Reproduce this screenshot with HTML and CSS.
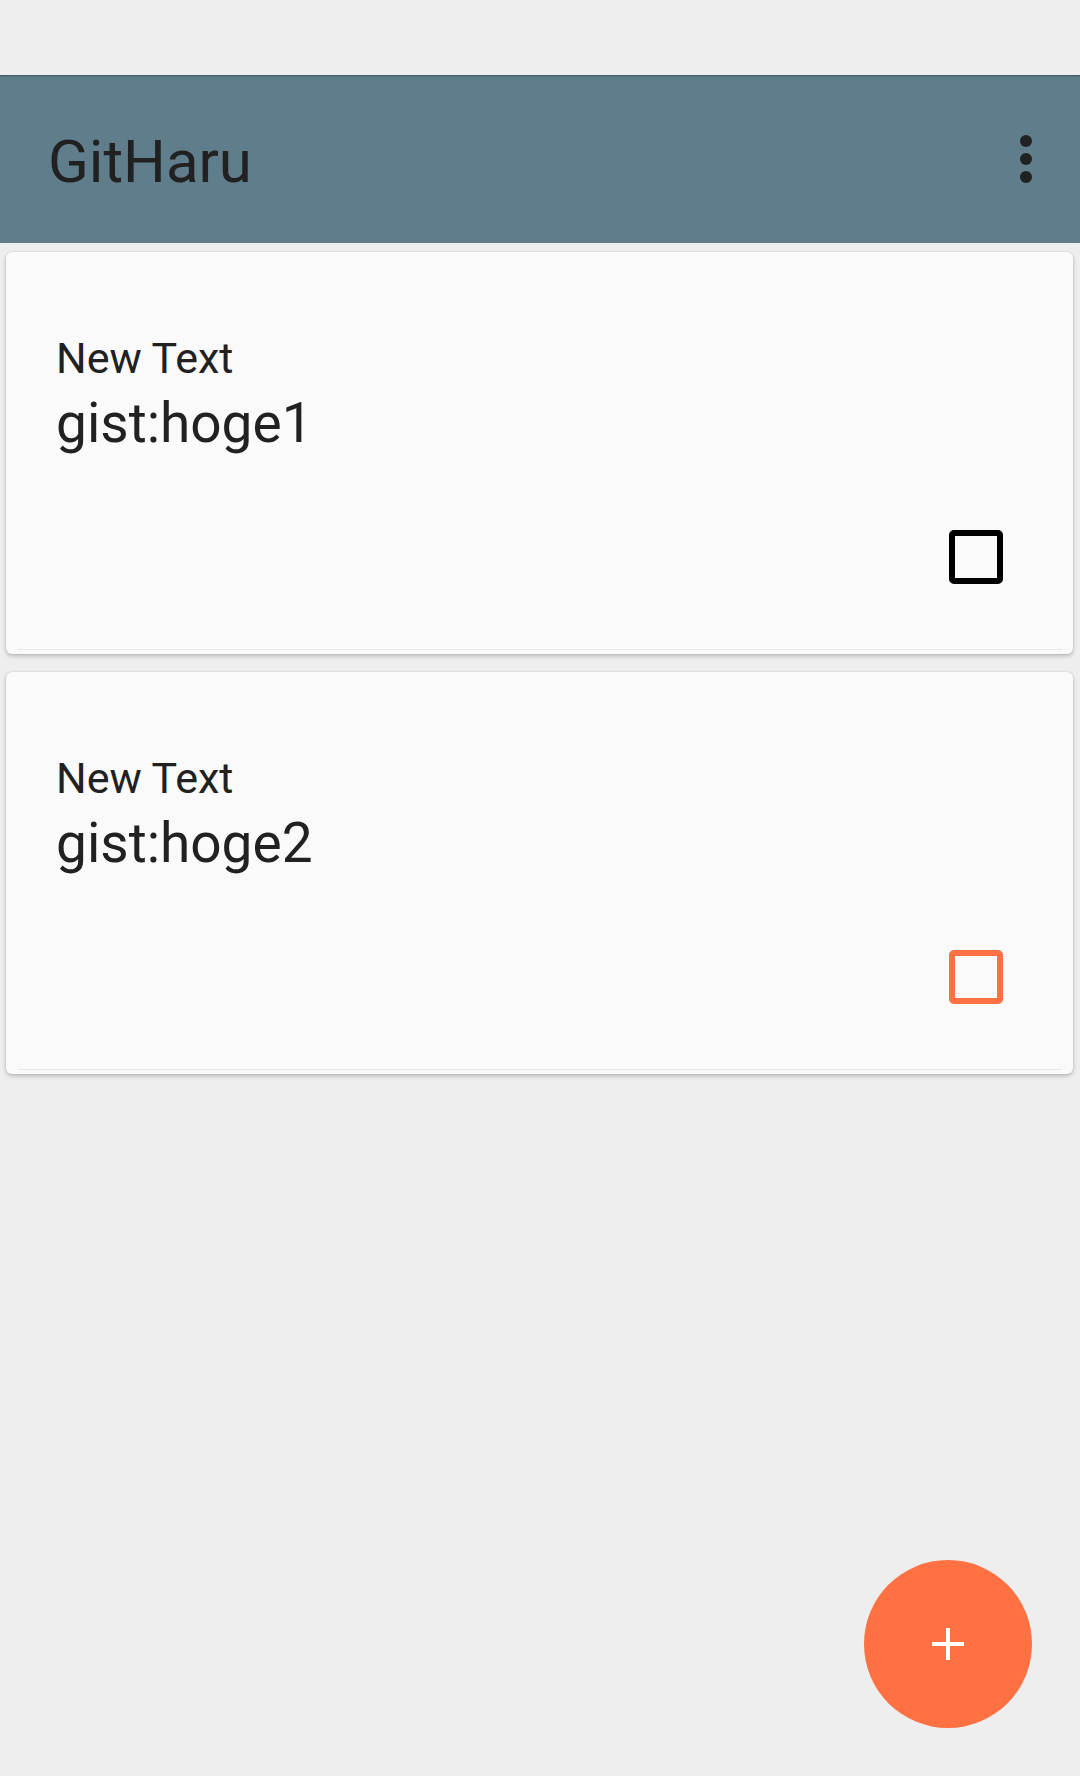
FILE: index.html
```html
<!DOCTYPE html>
<html>
<head>
<meta charset="utf-8">
<link rel="stylesheet" href="styles.css">
</head>
<body>
<div class="status-bar"></div>
<header class="app-bar">
  <div class="title">GitHaru</div>
  <svg class="menu" width="12" height="48" viewBox="0 0 12 48">
    <circle cx="6" cy="6" r="6" fill="#212121"/>
    <circle cx="6" cy="24" r="6" fill="#212121"/>
    <circle cx="6" cy="42" r="6" fill="#212121"/>
  </svg>
</header>
<main class="list">
  <div class="card">
    <div class="label">New Text</div>
    <div class="name">gist:hoge1</div>
    <div class="check-row"><div class="check"></div></div>
  </div>
  <div class="card">
    <div class="label">New Text</div>
    <div class="name">gist:hoge2</div>
    <div class="check-row"><div class="check accent"></div></div>
  </div>
</main>
<div class="fab">
  <svg width="32" height="32" viewBox="0 0 32 32">
    <rect x="0" y="14" width="32" height="4" fill="#fff"/>
    <rect x="14" y="0" width="4" height="32" fill="#fff"/>
  </svg>
</div>
</body>
</html>
```
FILE: styles.css
```css
html, body {
  margin: 0;
  padding: 0;
}
body {
  width: 1080px;
  height: 1776px;
  background: #eeeeee;
  font-family: Roboto, "Noto Sans", sans-serif;
  color: #212121;
  position: relative;
  overflow: hidden;
}
.status-bar {
  height: 75px;
  background: #eeeeee;
}
.app-bar {
  height: 168px;
  box-sizing: border-box;
  background: #607d8b;
  display: flex;
  align-items: center;
  justify-content: space-between;
  padding: 0 48px 0 48px;
  box-shadow: inset 0 2px 2px -1px rgba(0, 0, 0, 0.35);
}
.title {
  font-size: 60px;
  line-height: 60px;
  padding-top: 5px;
  color: #212121;
}
.menu {
  display: block;
}
.list {
  display: flex;
  flex-direction: column;
  gap: 18px;
  padding: 9px 7px 0 6px;
}
.card {
  position: relative;
  background: #fafafa;
  border-radius: 6px;
  box-shadow: 0 2px 4px rgba(0, 0, 0, 0.22), 0 0 2px rgba(0, 0, 0, 0.12);
  padding: 82px 70px 70px 50px;
  display: flex;
  flex-direction: column;
}
.card::after {
  content: "";
  position: absolute;
  left: 12px;
  right: 11px;
  bottom: 4px;
  height: 1px;
  background: #e8e8e8;
}
.label {
  font-size: 43px;
  line-height: 48px;
}
.name {
  font-size: 55px;
  line-height: 64px;
  margin-top: 9px;
}
.check-row {
  display: flex;
  justify-content: flex-end;
  margin-top: 75px;
}
.check {
  width: 54px;
  height: 54px;
  box-sizing: border-box;
  border: 6px solid #000;
  border-radius: 5px;
}
.check.accent {
  border-color: #ff7043;
}
.fab {
  position: absolute;
  right: 48px;
  bottom: 48px;
  width: 168px;
  height: 168px;
  border-radius: 50%;
  background: #ff7043;
  display: flex;
  align-items: center;
  justify-content: center;
}
.fab svg {
  display: block;
}
```
